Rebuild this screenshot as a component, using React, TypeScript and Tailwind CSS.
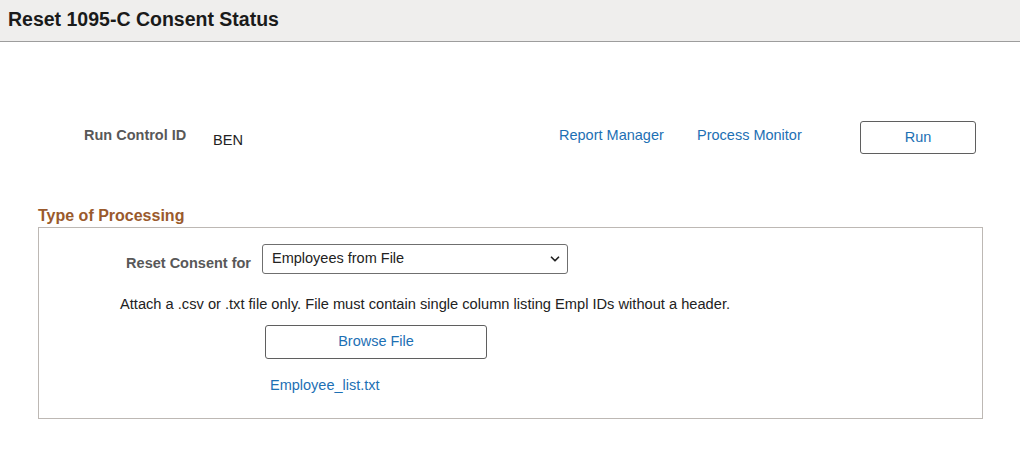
import { ChevronDown } from "lucide-react";

export default function App() {
  return (
    <div className="w-[1020px] h-[451px] bg-white overflow-hidden font-['Liberation_Sans',Arial,sans-serif] text-[#222]">
      {/* page header */}
      <div className="h-[42px] bg-[#efeeed] border-b border-[#9d9d9d] pl-[8px] pt-[7px]">
        <h1 className="text-[19.5px] leading-[24px] font-bold text-[#1a1a1a]">Reset 1095-C Consent Status</h1>
      </div>

      {/* run control row */}
      <div className="flex items-start mt-[79px] pl-[84px] h-[33px]">
        <div className="w-[129px] mt-[6px] text-[14.5px] leading-[16px] font-bold text-[#585858]">Run Control ID</div>
        <div className="w-[346px] mt-[11px] text-[14.6px] leading-[16px] text-[#222]">BEN</div>
        <a className="w-[138px] mt-[6px] text-[14.5px] leading-[16px] text-[#1d70b4] cursor-pointer">Report Manager</a>
        <a className="w-[163px] mt-[6px] text-[14.5px] leading-[16px] text-[#1d70b4] cursor-pointer">Process Monitor</a>
        <button className="w-[116px] h-[33px] border border-[#5f5f5f] rounded-[3px] bg-white text-[14.5px] text-[#1d70b4]">
          Run
        </button>
      </div>

      {/* type of processing */}
      <div className="ml-[38px] w-[945px] mt-[53px]">
        <h2 className="text-[16px] leading-[18px] font-bold text-[#9a5a2c]">Type of Processing</h2>
        <div className="mt-[2px] h-[192px] border border-[#bdb8b4] pt-[16px]">
          <div className="flex items-start">
            <label className="w-[212px] mt-[11px] text-right text-[14.5px] leading-[16px] font-bold text-[#585858]">Reset Consent for</label>
            <div className="relative ml-[11px] w-[306px] h-[30px]">
              <select
                defaultValue="file"
                className="appearance-none w-full h-full border border-[#6f6f6f] rounded-[3px] bg-white pl-[9px] text-[14.5px] text-[#222] outline-none"
              >
                <option value="file">Employees from File</option>
              </select>
              <ChevronDown size={14} strokeWidth={3} className="absolute right-[6px] top-[8px] text-[#222] pointer-events-none" />
            </div>
          </div>
          <p className="mt-[22px] ml-[81px] text-[14.65px] leading-[16px] text-[#222]">
            Attach a .csv or .txt file only. File must contain single column listing Empl IDs without a header.
          </p>
          <button className="block mt-[13px] ml-[226px] w-[222px] h-[34px] border border-[#5f5f5f] rounded-[3px] bg-white text-[14.5px] text-[#1d70b4]">
            Browse File
          </button>
          <a className="block mt-[18px] ml-[231px] w-fit text-[14.5px] leading-[16px] text-[#1d70b4] cursor-pointer">Employee_list.txt</a>
        </div>
      </div>
    </div>
  );
}
